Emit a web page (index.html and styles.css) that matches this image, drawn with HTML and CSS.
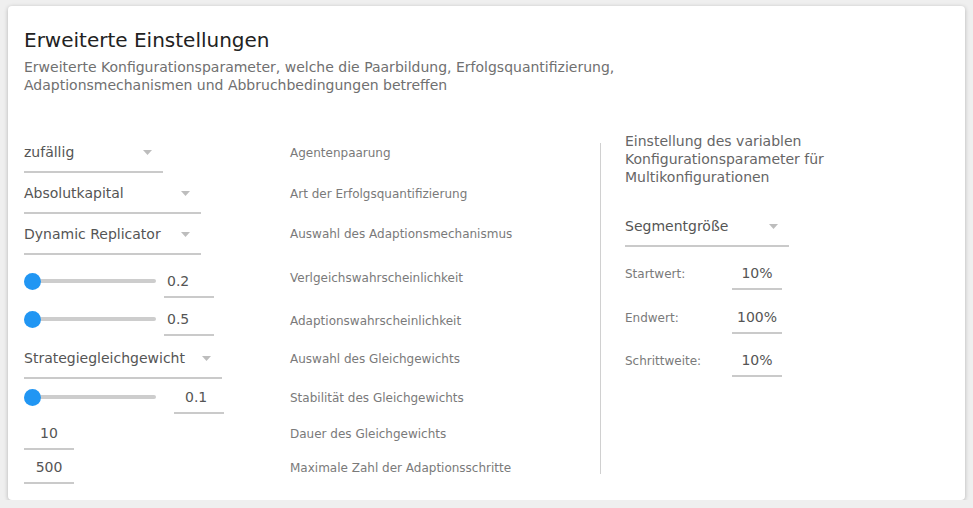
FILE: index.html
```html
<!DOCTYPE html>
<html lang="de">
<head>
<meta charset="utf-8">
<title>Erweiterte Einstellungen</title>
<link rel="stylesheet" href="styles.css">
</head>
<body>
<div class="card">
  <h1 class="title">Erweiterte Einstellungen</h1>
  <p class="subtitle">Erweiterte Konfigurationsparameter, welche die Paarbildung, Erfolgsquantifizierung, Adaptionsmechanismen und Abbruchbedingungen betreffen</p>
  <div class="content">
    <div class="params">
      <div class="row">
        <div class="ctrl"><div class="select w139"><span>zufällig</span><svg class="arrow" width="9" height="5" viewBox="0 0 9 5"><path d="M0 0H9L4.5 5Z"/></svg></div></div>
        <div class="label">Agentenpaarung</div>
      </div>
      <div class="row mt-n1">
        <div class="ctrl"><div class="select w177"><span>Absolutkapital</span><svg class="arrow" width="9" height="5" viewBox="0 0 9 5"><path d="M0 0H9L4.5 5Z"/></svg></div></div>
        <div class="label">Art der Erfolgsquantifizierung</div>
      </div>
      <div class="row mt-n1">
        <div class="ctrl"><div class="select w177"><span>Dynamic Replicator</span><svg class="arrow" width="9" height="5" viewBox="0 0 9 5"><path d="M0 0H9L4.5 5Z"/></svg></div></div>
        <div class="label nudge-up1">Auswahl des Adaptionsmechanismus</div>
      </div>
      <div class="row mt-9">
        <div class="ctrl slider-ctrl">
          <div class="slider"><div class="track"></div><div class="thumb"></div></div>
          <div class="field num-left">0.2</div>
        </div>
        <div class="label nudge-up">Verlgeichswahrscheinlichkeit</div>
      </div>
      <div class="row mt-4">
        <div class="ctrl slider-ctrl">
          <div class="slider"><div class="track"></div><div class="thumb"></div></div>
          <div class="field num-left">0.5</div>
        </div>
        <div class="label nudge-down">Adaptionswahrscheinlichkeit</div>
      </div>
      <div class="row mt-1">
        <div class="ctrl"><div class="select w198"><span>Strategiegleichgewicht</span><svg class="arrow" width="9" height="5" viewBox="0 0 9 5"><path d="M0 0H9L4.5 5Z"/></svg></div></div>
        <div class="label">Auswahl des Gleichgewichts</div>
      </div>
      <div class="row mt-1">
        <div class="ctrl slider-ctrl">
          <div class="slider"><div class="track"></div><div class="thumb"></div></div>
          <div class="field num-pad shifted">0.1</div>
        </div>
        <div class="label">Stabilität des Gleichgewichts</div>
      </div>
      <div class="row mt-2">
        <div class="ctrl"><div class="field num-center">10</div></div>
        <div class="label">Dauer des Gleichgewichts</div>
      </div>
      <div class="row">
        <div class="ctrl"><div class="field num-center">500</div></div>
        <div class="label">Maximale Zahl der Adaptionsschritte</div>
      </div>
    </div>
    <div class="divider"></div>
    <div class="multi">
      <p class="multi-heading">Einstellung des variablen Konfigurationsparameter für Multikonfigurationen</p>
      <div class="select w164 seg"><span>Segmentgröße</span><svg class="arrow" width="9" height="5" viewBox="0 0 9 5"><path d="M0 0H9L4.5 5Z"/></svg></div>
      <div class="mrow mt-9">
        <div class="mlabel">Startwert:</div>
        <div class="field num-center">10%</div>
      </div>
      <div class="mrow mt-10">
        <div class="mlabel">Endwert:</div>
        <div class="field num-center">100%</div>
      </div>
      <div class="mrow mt-9">
        <div class="mlabel">Schrittweite:</div>
        <div class="field num-center">10%</div>
      </div>
    </div>
  </div>
</div>
</body>
</html>
```

FILE: styles.css
```css
* { box-sizing: border-box; }

html, body {
  margin: 0;
  padding: 0;
}

body {
  background: #efefef;
  font-family: "DejaVu Sans", "Liberation Sans", sans-serif;
  color: #555;
}

.card {
  margin: 6px 0 0 8px;
  width: 957px;
  height: 494px;
  background: #fff;
  border-radius: 4px;
  box-shadow: 0 1px 4px rgba(0, 0, 0, 0.25);
  padding: 22px 16px 0 16px;
}

.title {
  margin: 0;
  font-size: 20px;
  line-height: 24px;
  font-weight: normal;
  color: #222;
}

.subtitle {
  margin: 6px 0 0 0;
  max-width: 620px;
  font-size: 14px;
  line-height: 18px;
  color: #707070;
}

.content {
  display: flex;
  margin-top: 37px;
}

.params {
  width: 576px;
  display: flex;
  flex-direction: column;
}

.row {
  display: flex;
  align-items: center;
}

.ctrl {
  width: 266px;
  flex: none;
  display: flex;
  align-items: center;
}

.label {
  font-size: 12px;
  line-height: 16px;
  padding-top: 2px;
  color: #7a7a7a;
}

.nudge-up { position: relative; top: -4px; }
.nudge-up1 { position: relative; top: -1px; }
.nudge-down { position: relative; top: 1px; }

.mt-n1 { margin-top: -1px; }
.mt-1 { margin-top: 1px; }
.mt-2 { margin-top: 2px; }
.mt-4 { margin-top: 4px; }
.mt-9 { margin-top: 9px; }
.mt-10 { margin-top: 10px; }

.select {
  display: flex;
  align-items: center;
  justify-content: space-between;
  padding: 11px 11px 9px 0;
  border-bottom: 2px solid #cacaca;
  font-size: 14px;
  line-height: 20px;
  color: #555;
}

.arrow { fill: #bdbdbd; display: block; }

.w139 { width: 139px; }
.w164 { width: 164px; }
.w177 { width: 177px; }
.w198 { width: 198px; }

.field {
  width: 50px;
  padding: 7px 0 5px 0;
  border-bottom: 2px solid #cacaca;
  font-size: 14px;
  line-height: 20px;
  color: #555;
}

.num-left { padding-left: 3px; }
.num-pad { padding-left: 11px; }
.num-center { text-align: center; }
.shifted { margin-left: 10px; }

.slider {
  position: relative;
  width: 132px;
  height: 18px;
  margin-right: 8px;
}

.track {
  position: absolute;
  left: 8px;
  right: 0;
  top: 7px;
  height: 4px;
  border-radius: 2px;
  background: #cdcdcd;
}

.thumb {
  position: absolute;
  left: 0;
  top: 1px;
  width: 17px;
  height: 17px;
  border-radius: 50%;
  background: #2196f3;
}

.divider {
  width: 1px;
  background: #d0d0d0;
  margin: 12px 0 10px 0;
}

.multi {
  padding: 1px 0 0 24px;
  display: flex;
  flex-direction: column;
}

.multi-heading {
  margin: 0;
  width: 230px;
  font-size: 14px;
  line-height: 18px;
  color: #666;
}

.seg { margin-top: 19px; }

.mrow {
  display: flex;
  align-items: center;
}

.mlabel {
  width: 107px;
  font-size: 12px;
  line-height: 16px;
  padding-top: 2px;
  color: #7a7a7a;
}
```
